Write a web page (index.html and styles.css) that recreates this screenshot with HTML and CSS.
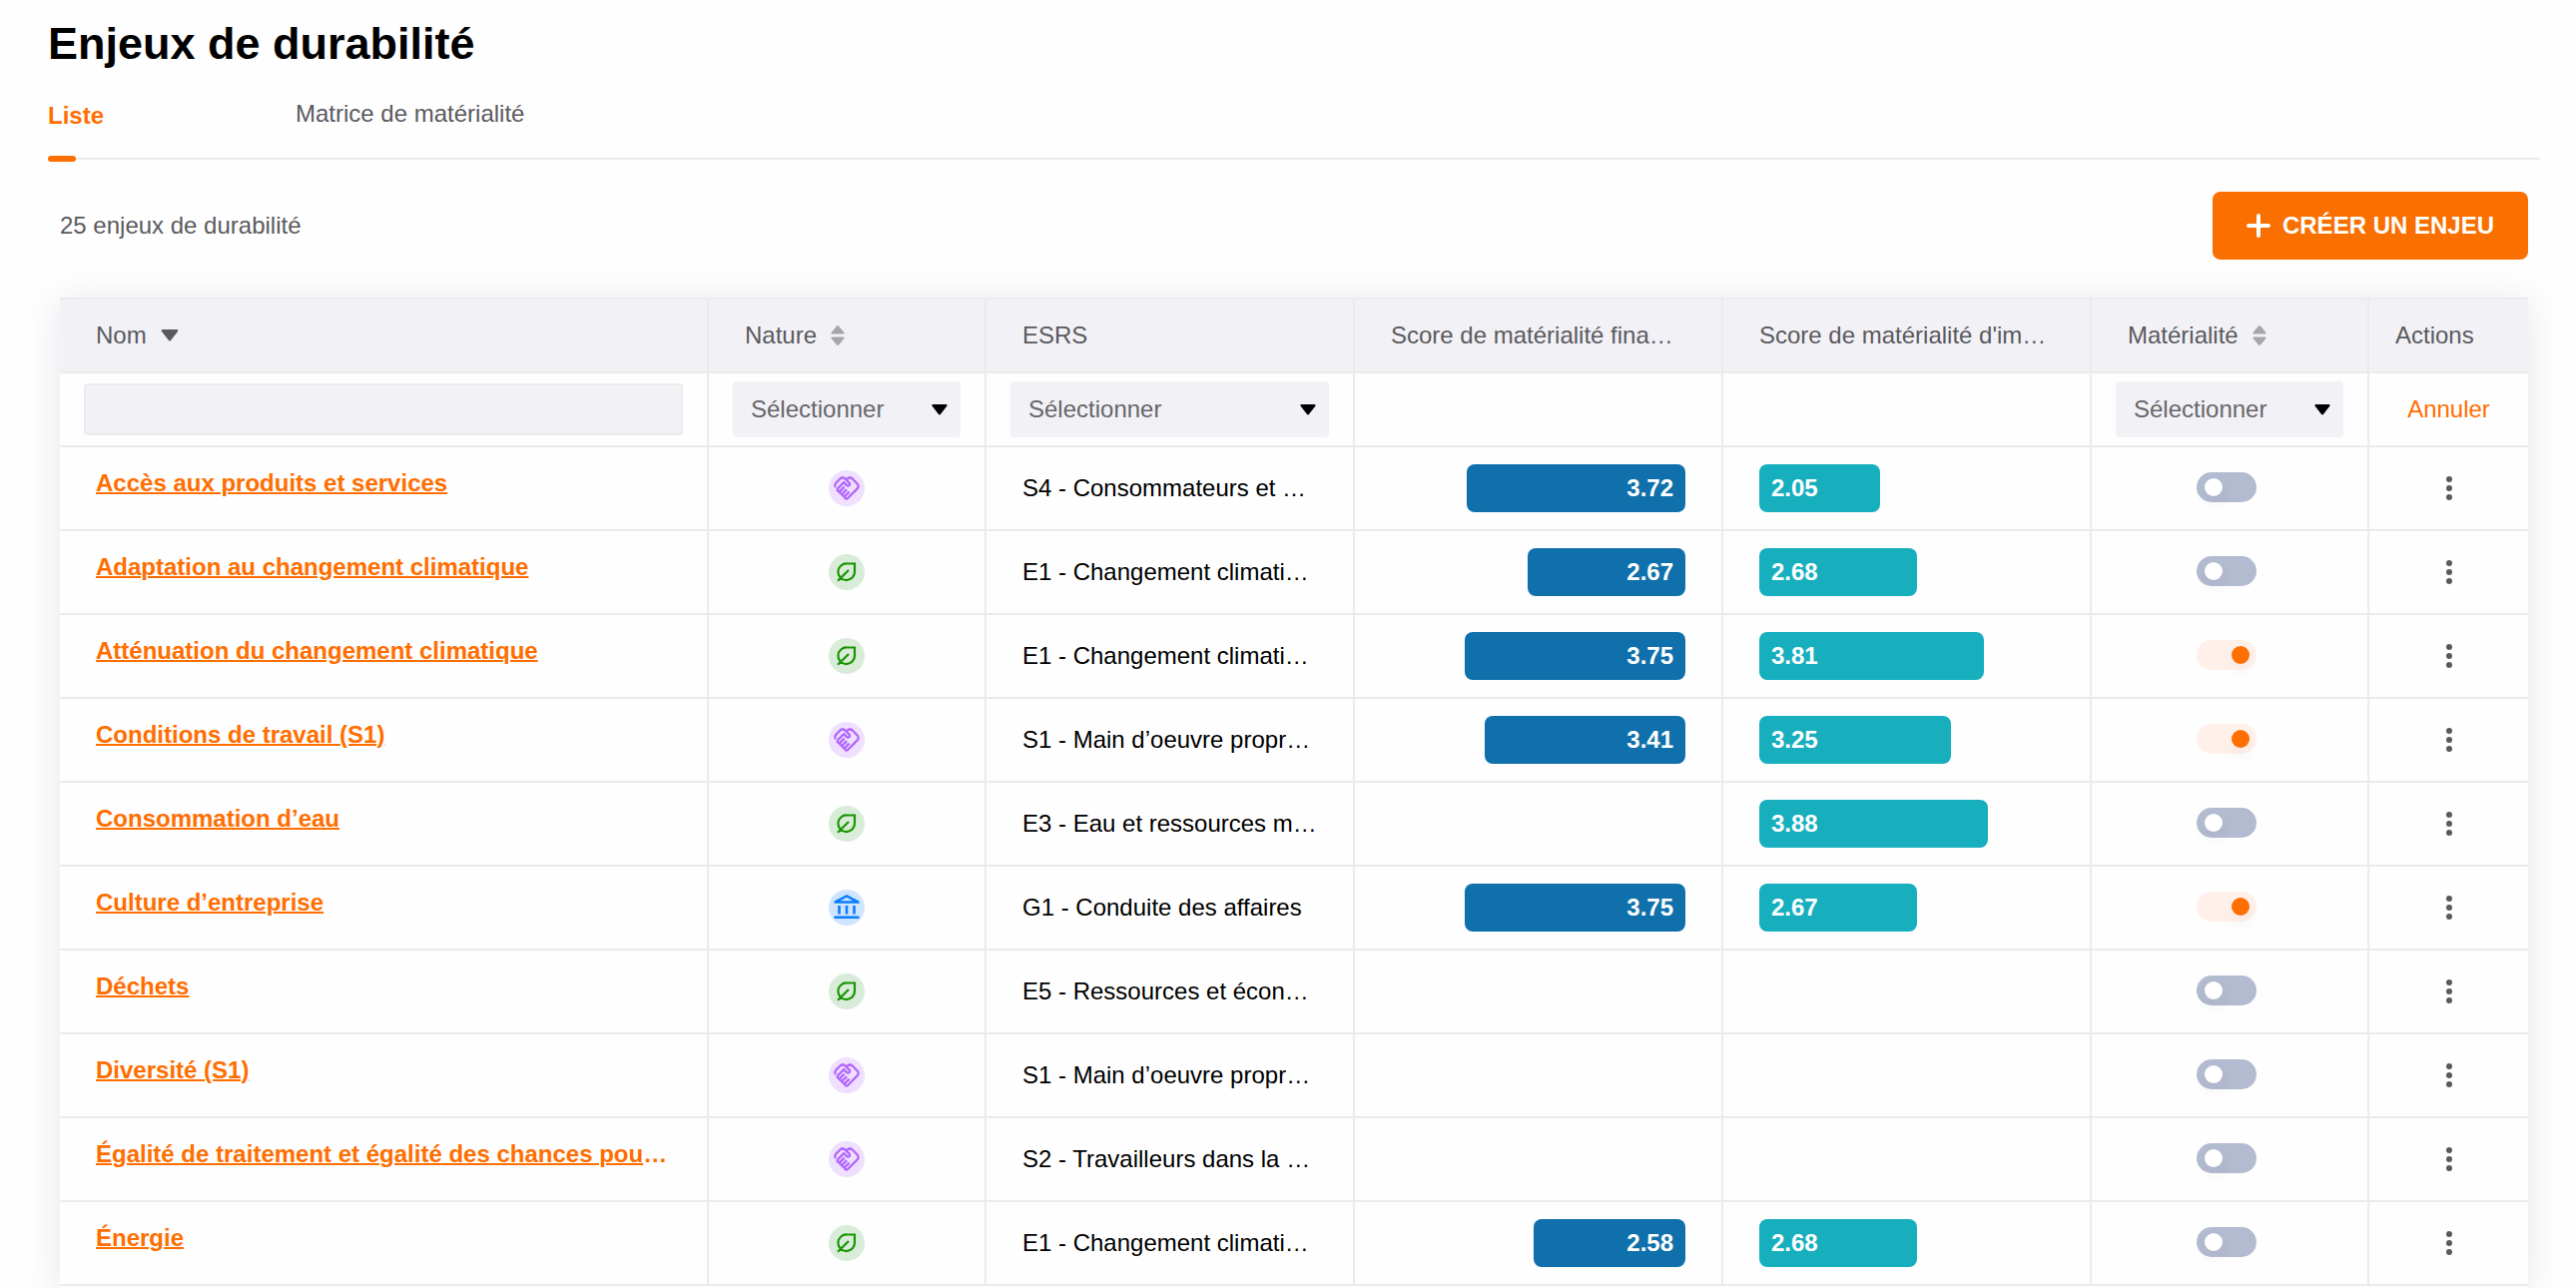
FILE: index.html
```html
<!DOCTYPE html>
<html lang="fr">
<head>
	<meta charset="utf-8">
	<title>Enjeux de durabilité</title>
	<link rel="stylesheet" href="styles.css">
</head>
<body>
	<!-- icons -->
	<svg class="sprite" aria-hidden="true">
		<symbol id="social" viewBox="0 0 24 24">
			<path fill="currentColor" d="M12.22,19.85c-0.18,0.18-0.5,0.21-0.71,0c-0.18-0.18-0.21-0.5,0-0.71l3.39-3.39l-1.41-1.41l-3.39,3.39c-0.19,0.2-0.51,0.19-0.71,0c-0.21-0.21-0.18-0.53,0-0.71l3.39-3.39l-1.41-1.41l-3.39,3.39c-0.18,0.18-0.5,0.21-0.71,0c-0.19-0.19-0.19-0.51,0-0.71l3.39-3.39L9.24,10.1l-3.39,3.39c-0.18,0.18-0.5,0.21-0.71,0c-0.19-0.2-0.19-0.51,0-0.71L9.52,8.4l1.87,1.86c0.95,0.95,2.59,0.94,3.54,0c0.98-0.98,0.98-2.56,0-3.54l-1.86-1.86l0.28-0.28c0.78-0.78,2.05-0.78,2.83,0l4.24,4.24c0.78,0.78,0.78,2.05,0,2.83L12.22,19.85z M21.83,13.07c1.56-1.56,1.56-4.09,0-5.66l-4.24-4.24c-1.56-1.56-4.09-1.56-5.66,0l-0.28,0.28l-0.28-0.28c-1.56-1.56-4.09-1.56-5.66,0L2.17,6.71c-1.42,1.42-1.55,3.63-0.4,5.19l1.45-1.45c-0.39-0.75-0.26-1.7,0.37-2.33l3.54-3.54c0.78-0.78,2.05-0.78,2.83,0l3.56,3.56c0.18,0.18,0.21,0.5,0,0.71c-0.21,0.21-0.53,0.18-0.71,0L9.52,5.57l-5.8,5.79c-0.98,0.97-0.98,2.56,0,3.54c0.39,0.39,0.89,0.63,1.42,0.7c0.07,0.52,0.3,1.02,0.7,1.42c0.4,0.4,0.9,0.63,1.42,0.7c0.07,0.52,0.3,1.02,0.7,1.42c0.4,0.4,0.9,0.63,1.42,0.7c0.07,0.54,0.31,1.03,0.7,1.42c0.47,0.47,1.1,0.73,1.77,0.73c0.67,0,1.3-0.26,1.77-0.73L21.83,13.07z"/>
		</symbol>
		<symbol id="env" viewBox="0 0 28 28">
			<path fill="none" stroke="currentColor" stroke-width="2.2" d="M22 5.500H14.500A8.300 8.300 0 1 0 22 13.500ZM5 22.800L16 12"/>
		</symbol>
		<symbol id="gov" viewBox="0 0 28 28">
			<path fill="currentColor" fill-rule="evenodd" d="M14 1L26.500 7.500V9.800H1.500V7.500ZM14 3.800L7.500 7.300H20.500ZM5.200 12H7.800V20.500H5.200ZM12.700 12H15.300V20.500H12.700ZM20.200 12H22.800V20.500H20.200ZM1.500 22.500H26.500V25H1.500Z"/>
		</symbol>
		<symbol id="dots" viewBox="0 0 6 24">
			<circle cx="3" cy="3" r="3"/><circle cx="3" cy="12" r="3"/><circle cx="3" cy="21" r="3"/>
		</symbol>
		<symbol id="down" viewBox="0 0 18 12">
			<path d="M1.500 0H16.500Q18 .5 17 2L10 11Q9 12 8 11L1 2Q0 .5 1.500 0Z"/>
		</symbol>
		<symbol id="sort" viewBox="0 0 14 20">
			<path d="M7 0Q7.600 0 8 .5L13.400 7Q14 8.600 12.500 8.600H1.500Q0 8.600 .6 7L6 .5Q6.400 0 7 0ZM1.500 11.400H12.500Q14 11.400 13.400 13L8 19.500Q7 20.400 6 19.500L.6 13Q0 11.400 1.500 11.400Z"/>
		</symbol>
	</svg>

	<h1>Enjeux de durabilité</h1>
	<nav class="tabs">
		<a class="tab active" href="#liste">Liste</a>
		<a class="tab" href="#matrice">Matrice de matérialité</a>
	</nav>

	<main class="content" id="liste">
		<div class="toolbar">
			<p>25 enjeux de durabilité</p>
			<button class="create" type="button">
				<svg class="plus" viewBox="0 0 24 24"><path d="M12 2V22M2 12H22" stroke="currentColor" stroke-width="4" stroke-linecap="round"/></svg>
				CRÉER UN ENJEU
			</button>
		</div>

		<div class="table-box">
		<table>
			<colgroup>
				<col><col class="c-small"><col class="c-mid"><col class="c-mid"><col class="c-mid"><col class="c-small"><col class="c-act">
			</colgroup>
			<thead>
				<tr class="head">
					<th scope="col"><span class="label">Nom <svg class="down"><use href="#down"/></svg></span></th>
					<th scope="col"><span class="label">Nature <svg class="sort"><use href="#sort"/></svg></span></th>
					<th scope="col">ESRS</th>
					<th scope="col">Score de matérialité financière</th>
					<th scope="col">Score de matérialité d'impact</th>
					<th scope="col"><span class="label">Matérialité <svg class="sort"><use href="#sort"/></svg></span></th>
					<th scope="col" class="act">Actions</th>
				</tr>
				<tr class="filters">
					<td><input class="search" type="text" aria-label="Nom"></td>
					<td><div class="select"><select aria-label="Nature"><option>Sélectionner</option></select><svg class="arrow"><use href="#down"/></svg></div></td>
					<td><div class="select"><select aria-label="ESRS"><option>Sélectionner</option></select><svg class="arrow"><use href="#down"/></svg></div></td>
					<td></td>
					<td></td>
					<td><div class="select"><select aria-label="Matérialité"><option>Sélectionner</option></select><svg class="arrow"><use href="#down"/></svg></div></td>
					<td class="center"><button class="cancel" type="button">Annuler</button></td>
				</tr>
			</thead>
			<tbody>
				<tr>
					<td class="name"><a href="#">Accès aux produits et services</a></td>
					<td class="center"><span class="icon social"><svg><use href="#social"/></svg></span></td>
					<td>S4 - Consommateurs et utilisateurs finaux</td>
					<td><div class="bar fin" style="width: 74.4%">3.72</div></td>
					<td><div class="bar imp" style="width: 41%">2.05</div></td>
					<td class="toggle"><input type="checkbox" aria-label="Matérialité"></td>
					<td class="center"><button class="more" type="button" aria-label="Actions"><svg><use href="#dots"/></svg></button></td>
				</tr>
				<tr>
					<td class="name"><a href="#">Adaptation au changement climatique</a></td>
					<td class="center"><span class="icon env"><svg><use href="#env"/></svg></span></td>
					<td>E1 - Changement climatique</td>
					<td><div class="bar fin" style="width: 53.4%">2.67</div></td>
					<td><div class="bar imp" style="width: 53.6%">2.68</div></td>
					<td class="toggle"><input type="checkbox" aria-label="Matérialité"></td>
					<td class="center"><button class="more" type="button" aria-label="Actions"><svg><use href="#dots"/></svg></button></td>
				</tr>
				<tr>
					<td class="name"><a href="#">Atténuation du changement climatique</a></td>
					<td class="center"><span class="icon env"><svg><use href="#env"/></svg></span></td>
					<td>E1 - Changement climatique</td>
					<td><div class="bar fin" style="width: 75%">3.75</div></td>
					<td><div class="bar imp" style="width: 76.2%">3.81</div></td>
					<td class="toggle"><input type="checkbox" aria-label="Matérialité" checked></td>
					<td class="center"><button class="more" type="button" aria-label="Actions"><svg><use href="#dots"/></svg></button></td>
				</tr>
				<tr>
					<td class="name"><a href="#">Conditions de travail (S1)</a></td>
					<td class="center"><span class="icon social"><svg><use href="#social"/></svg></span></td>
					<td>S1 - Main d’oeuvre propre à l’entreprise</td>
					<td><div class="bar fin" style="width: 68.2%">3.41</div></td>
					<td><div class="bar imp" style="width: 65%">3.25</div></td>
					<td class="toggle"><input type="checkbox" aria-label="Matérialité" checked></td>
					<td class="center"><button class="more" type="button" aria-label="Actions"><svg><use href="#dots"/></svg></button></td>
				</tr>
				<tr>
					<td class="name"><a href="#">Consommation d’eau</a></td>
					<td class="center"><span class="icon env"><svg><use href="#env"/></svg></span></td>
					<td>E3 - Eau et ressources marines</td>
					<td></td>
					<td><div class="bar imp" style="width: 77.6%">3.88</div></td>
					<td class="toggle"><input type="checkbox" aria-label="Matérialité"></td>
					<td class="center"><button class="more" type="button" aria-label="Actions"><svg><use href="#dots"/></svg></button></td>
				</tr>
				<tr>
					<td class="name"><a href="#">Culture d’entreprise</a></td>
					<td class="center"><span class="icon gov"><svg><use href="#gov"/></svg></span></td>
					<td>G1 - Conduite des affaires</td>
					<td><div class="bar fin" style="width: 75%">3.75</div></td>
					<td><div class="bar imp" style="width: 53.4%">2.67</div></td>
					<td class="toggle"><input type="checkbox" aria-label="Matérialité" checked></td>
					<td class="center"><button class="more" type="button" aria-label="Actions"><svg><use href="#dots"/></svg></button></td>
				</tr>
				<tr>
					<td class="name"><a href="#">Déchets</a></td>
					<td class="center"><span class="icon env"><svg><use href="#env"/></svg></span></td>
					<td>E5 - Ressources et économie circulaire</td>
					<td></td>
					<td></td>
					<td class="toggle"><input type="checkbox" aria-label="Matérialité"></td>
					<td class="center"><button class="more" type="button" aria-label="Actions"><svg><use href="#dots"/></svg></button></td>
				</tr>
				<tr>
					<td class="name"><a href="#">Diversité (S1)</a></td>
					<td class="center"><span class="icon social"><svg><use href="#social"/></svg></span></td>
					<td>S1 - Main d’oeuvre propre à l’entreprise</td>
					<td></td>
					<td></td>
					<td class="toggle"><input type="checkbox" aria-label="Matérialité"></td>
					<td class="center"><button class="more" type="button" aria-label="Actions"><svg><use href="#dots"/></svg></button></td>
				</tr>
				<tr>
					<td class="name"><a href="#">Égalité de traitement et égalité des chances pour tous</a></td>
					<td class="center"><span class="icon social"><svg><use href="#social"/></svg></span></td>
					<td>S2 - Travailleurs dans la chaîne de valeur</td>
					<td></td>
					<td></td>
					<td class="toggle"><input type="checkbox" aria-label="Matérialité"></td>
					<td class="center"><button class="more" type="button" aria-label="Actions"><svg><use href="#dots"/></svg></button></td>
				</tr>
				<tr>
					<td class="name"><a href="#">Énergie</a></td>
					<td class="center"><span class="icon env"><svg><use href="#env"/></svg></span></td>
					<td>E1 - Changement climatique</td>
					<td><div class="bar fin" style="width: 51.6%">2.58</div></td>
					<td><div class="bar imp" style="width: 53.6%">2.68</div></td>
					<td class="toggle"><input type="checkbox" aria-label="Matérialité"></td>
					<td class="center"><button class="more" type="button" aria-label="Actions"><svg><use href="#dots"/></svg></button></td>
				</tr>
			</tbody>
		</table>
		</div>
	</main>
</body>
</html>
```
FILE: styles.css
```css
* {
	box-sizing: border-box;
	margin: 0;
	padding: 0;
}

body {
	padding: 16px 36px 0 48px;
	background: #fefefe;
	color: #000;
	font-family: "Liberation Sans", Arial, sans-serif;
	font-size: 24px;
	line-height: 32px;
}

button, input, select {
	font: inherit;
	border: 0;
	background: none;
}

.sprite {
	display: none;
}

h1 {
	font-size: 45px;
	line-height: 56px;
}

/* tabs */
.tabs {
	display: flex;
	height: 88px;
	padding-top: 26px;
	border-bottom: 2px solid #ebebec;
}

.tab {
	min-width: 248px;
	color: #5a5a5e;
	text-decoration: none;
}

.tab.active {
	position: relative;
	padding-top: 2px;
	color: #ff6e00;
	font-weight: bold;
}

.tab.active::after {
	content: "";
	position: absolute;
	left: 0;
	bottom: -4px;
	width: 28px;
	height: 6px;
	border-radius: 3px;
	background: #ff6e00;
}

.content {
	padding: 32px 12px 0;
}

.toolbar {
	display: flex;
	justify-content: space-between;
	align-items: center;
	margin-bottom: 38px;
	color: #5a5a5e;
}

.create {
	display: flex;
	align-items: center;
	gap: 12px;
	height: 68px;
	padding: 0 34px;
	border-radius: 8px;
	background: #f96f00;
	color: #fff;
	font-weight: bold;
}

.plus {
	width: 24px;
	height: 24px;
}

/* table */
.table-box {
	padding-bottom: 2px;
	background: #fefefe;
	box-shadow: 0 4px 32px rgba(60, 40, 90, 0.12);
}

table {
	width: 100%;
	table-layout: fixed;
	border-collapse: separate;
	border-spacing: 0;
}

.c-small { width: 278px; }
.c-mid { width: 369px; }
.c-act { width: 159px; }

th, td {
	padding: 0 36px;
	border-right: 2px solid #ebebec;
	border-bottom: 2px solid #ebebec;
	overflow: hidden;
	white-space: nowrap;
	text-overflow: ellipsis;
	text-align: left;
}

th:last-child, td:last-child {
	border-right: 0;
}

th {
	height: 76px;
	border-top: 2px solid #ebebec;
	background: #f2f1f6;
	color: #5a5a5e;
	font-weight: normal;
}

.act {
	padding: 0 26px;
}

.label {
	display: flex;
	align-items: center;
	gap: 14px;
}

.down {
	width: 18px;
	height: 12px;
	fill: #5a5a5e;
}

.sort {
	width: 14px;
	height: 20px;
	fill: #a5a5aa;
}

.filters td {
	height: 74px;
	padding: 0 24px;
}

.search {
	display: block;
	width: 100%;
	height: 52px;
	padding: 0 18px;
	border: 2px solid #ebebec;
	border-radius: 4px;
	background: #f2f1f6;
}

.select {
	position: relative;
}

.select select {
	display: block;
	appearance: none;
	width: 100%;
	height: 56px;
	padding: 0 18px;
	border-radius: 4px;
	background: #f2f1f6;
	color: #66666a;
}

.arrow {
	position: absolute;
	top: 23px;
	right: 12px;
	width: 18px;
	height: 11px;
	pointer-events: none;
}

.center, .filters .center {
	padding: 0;
	text-align: center;
}

.cancel {
	color: #ff6e00;
}

tbody td {
	height: 84px;
}

td.name {
	padding-bottom: 10px;
	color: #ff6e00;
	font-weight: bold;
}

.name a {
	color: #ff6e00;
	text-decoration-thickness: 2px;
}

.icon {
	display: flex;
	align-items: center;
	justify-content: center;
	width: 36px;
	height: 36px;
	margin: 0 auto;
	border-radius: 50%;
}

.icon svg {
	width: 28px;
	height: 28px;
}

.social { background: #efe0ff; color: #b266ff; }
.env { background: #d9ecd9; color: #179600; }
.gov { background: #cfe4ff; color: #0a7cff; }

.bar {
	height: 48px;
	padding: 0 12px;
	border-radius: 8px;
	color: #fff;
	font-weight: bold;
	line-height: 48px;
}

.fin {
	margin-left: auto;
	background: #1070ab;
	text-align: right;
}

.imp {
	background: #17afbe;
}

td.toggle {
	padding: 0 6px 2px 0;
	text-align: center;
}

.toggle input {
	appearance: none;
	display: block;
	width: 60px;
	height: 30px;
	margin: 0 auto;
	padding: 6px 8px;
	border-radius: 15px;
	background: #b3bbd0;
}

.toggle input::before {
	content: "";
	display: block;
	width: 18px;
	height: 18px;
	border-radius: 50%;
	background: #fff;
	box-shadow: 0 8px 16px rgba(60, 40, 90, 0.06);
}

.toggle input:checked {
	background: #fff1ea;
}

.toggle input:checked::before {
	margin-left: 27px;
	background: #ff6e00;
}

.more {
	display: block;
	width: 24px;
	height: 24px;
	margin: 0 auto;
}

.more svg {
	display: block;
	width: 6px;
	height: 24px;
	margin: 0 auto;
	fill: #5a5a5e;
}
```
